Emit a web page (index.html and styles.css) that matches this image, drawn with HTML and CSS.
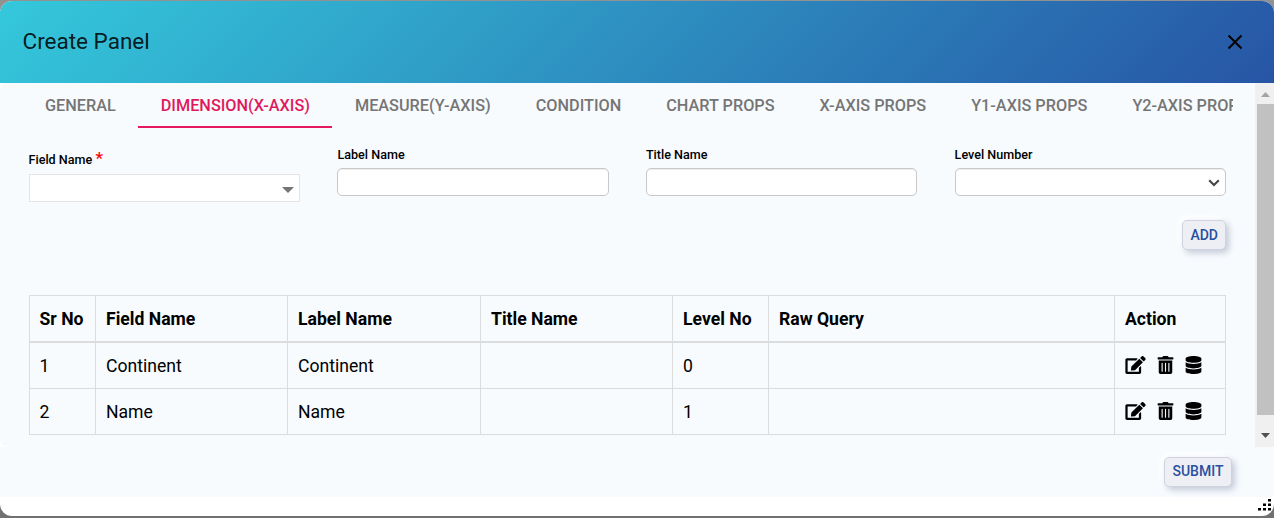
FILE: index.html
```html
<!DOCTYPE html>
<html lang="en">
<head>
<meta charset="utf-8">
<title>Create Panel</title>
<link rel="stylesheet" href="styles.css">
</head>
<body>
<svg class="defs" width="0" height="0">
  <symbol id="edit" viewBox="0 0 576 512"><path d="M402.6 83.200l90.200 90.200c3.800 3.800 3.800 10 0 13.800L274.400 405.600l-92.800 10.300c-12.400 1.400-22.900-9.100-21.500-21.500l10.300-92.800L388.800 83.200c3.800-3.800 10-3.800 13.800 0zm162-22.900l-48.800-48.800c-15.200-15.200-39.900-15.200-55.200 0l-35.400 35.400c-3.800 3.800-3.800 10 0 13.800l90.200 90.200c3.800 3.800 10 3.800 13.800 0l35.400-35.400c15.200-15.300 15.200-40 0-55.200zM384 346.200V448H64V128h229.800c3.200 0 6.200-1.300 8.500-3.500l40-40c7.600-7.600 2.200-20.500-8.500-20.500H48C21.500 64 0 85.500 0 112v352c0 26.500 21.500 48 48 48h352c26.500 0 48-21.500 48-48V306.200c0-10.700-12.900-16-20.500-8.500l-40 40c-2.200 2.300-3.500 5.300-3.500 8.500z"/></symbol>
  <symbol id="trash" viewBox="0 0 448 512"><path d="M32 464a48 48 0 0 0 48 48h288a48 48 0 0 0 48-48V128H32zm272-256a16 16 0 0 1 32 0v224a16 16 0 0 1-32 0zm-96 0a16 16 0 0 1 32 0v224a16 16 0 0 1-32 0zm-96 0a16 16 0 0 1 32 0v224a16 16 0 0 1-32 0zM432 32H312l-9.400-18.700A24 24 0 0 0 281.100 0H166.800a23.700 23.700 0 0 0-21.400 13.300L136 32H16A16 16 0 0 0 0 48v32a16 16 0 0 0 16 16h416a16 16 0 0 0 16-16V48a16 16 0 0 0-16-16z"/></symbol>
  <symbol id="database" viewBox="0 0 448 512"><path d="M448 73.100v45.700C448 159.100 347.700 192 224 192S0 159.100 0 118.900V73.100C0 32.900 100.300 0 224 0s224 32.900 224 73.100zM448 176v102.900C448 319.100 347.700 352 224 352S0 319.100 0 278.900V176c48.100 33.100 136.200 48.600 224 48.600S399.900 209.100 448 176zm0 160v102.900C448 479.100 347.700 512 224 512S0 479.100 0 438.900V336c48.100 33.100 136.200 48.600 224 48.600S399.900 369.100 448 336z"/></symbol>
</svg>
<div class="dialog">
  <header class="header">
    <h1 class="title">Create Panel</h1>
    <svg class="close" viewBox="0 0 16 16"><path d="M1.500 1.500l13 13M14.500 1.500l-13 13"/></svg>
  </header>
  <div class="body">
    <main class="content">
      <nav class="tabs">
        <span class="tab">GENERAL</span>
        <span class="tab active">DIMENSION(X-AXIS)</span>
        <span class="tab">MEASURE(Y-AXIS)</span>
        <span class="tab">CONDITION</span>
        <span class="tab">CHART PROPS</span>
        <span class="tab">X-AXIS PROPS</span>
        <span class="tab">Y1-AXIS PROPS</span>
        <span class="tab">Y2-AXIS PROPS</span>
      </nav>
      <div class="fields">
        <div class="field">
          <div class="label required">Field Name <span class="star">*</span></div>
          <div class="box combo"><svg class="caret" viewBox="0 0 12 6"><path d="M0 0h12L6 6z"/></svg></div>
        </div>
        <div class="field"><div class="label">Label Name</div><div class="box"></div></div>
        <div class="field"><div class="label">Title Name</div><div class="box"></div></div>
        <div class="field"><div class="label">Level Number</div><div class="box select"><svg class="chevron" viewBox="0 0 12 8"><path d="M1.200 1.200L6 6l4.800-4.800"/></svg></div></div>
      </div>
      <div class="actions"><button class="btn">ADD</button></div>
      <table class="grid">
        <colgroup><col class="c-sr"><col class="c-field"><col class="c-label"><col class="c-title"><col class="c-level"><col class="c-query"><col class="c-action"></colgroup>
        <thead><tr><th>Sr No</th><th>Field Name</th><th>Label Name</th><th>Title Name</th><th>Level No</th><th>Raw Query</th><th>Action</th></tr></thead>
        <tbody>
          <tr><td>1</td><td>Continent</td><td>Continent</td><td></td><td>0</td><td></td><td><div class="icons"><svg class="i-edit"><use href="#edit"/></svg><svg class="i-trash"><use href="#trash"/></svg><svg class="i-db"><use href="#database"/></svg></div></td></tr>
          <tr><td>2</td><td>Name</td><td>Name</td><td></td><td>1</td><td></td><td><div class="icons"><svg class="i-edit"><use href="#edit"/></svg><svg class="i-trash"><use href="#trash"/></svg><svg class="i-db"><use href="#database"/></svg></div></td></tr>
        </tbody>
      </table>
    </main>
    <div class="scrollbar">
      <svg class="arrow up" viewBox="0 0 9 5"><path d="M0 5h9L4.500 0z"/></svg>
      <div class="thumb"></div>
      <svg class="arrow down" viewBox="0 0 9 5"><path d="M0 0h9L4.500 5z"/></svg>
    </div>
  </div>
  <footer class="footer"><button class="btn submit">SUBMIT</button></footer>
  <div class="resize"><svg class="grip" viewBox="0 0 13 12"><path d="M10 0h3v2.500h-3zM5 4.500h3V7H5zM10 4.500h3V7h-3zM0 9h3v2.500H0zM5 9h3v2.500H5zM10 9h3v2.500h-3z"/></svg></div>
</div>
</body>
</html>
```
FILE: styles.css
```css
* { box-sizing: border-box; }
body {
  margin: 0;
  height: 518px;
  padding-top: 1px;
  overflow: hidden;
  background: linear-gradient(#929292, #707070);
  font-family: Roboto, sans-serif;
  color: #000;
}
.defs { position: absolute; }
.dialog {
  height: 515px;
  border-radius: 12px;
  overflow: hidden;
  background: #fff;
}
.header {
  height: 82px;
  padding: 0 31px 0 22.500px;
  display: flex;
  align-items: center;
  justify-content: space-between;
  background: linear-gradient(135deg, #34c8db 0%, #2755a5 100%);
}
.title { margin: 0 0 2px; font-size: 22.500px; font-weight: 400; line-height: 26px; color: rgba(0, 0, 0, .87); }
.close { width: 16px; height: 16px; fill: none; stroke: #000; stroke-width: 2; }
.body { height: 364px; display: flex; }
.content {
  width: 1255px;
  padding: 0 29px 0 29px;
  background: #f7fbfe;
  border-radius: 8px 0 0 8px;
}
.tabs {
  height: 45px;
  margin: 0 -7px 0 -6.500px;
  width: 1210.500px;
  display: flex;
  overflow: hidden;
}
.tab {
  flex: none;
  height: 45px;
  padding: 0 22.500px;
  font-size: 16.250px;
  font-weight: 500;
  line-height: 45px;
  color: #757575;
}
.tab.active { color: #e0195c; border-bottom: 2px solid #e6175c; }
.fields {
  height: 92px;
  padding-top: 18px;
  display: grid;
  grid-template-columns: repeat(4, 271.250px);
  column-gap: 37.200px;
}
.label { height: 22px; padding-top: 1px; font-size: 12.600px; font-weight: 500; line-height: 16px; }
.field:last-child { margin: 0 -.3px 0 .3px; }
.label.required { height: 28px; padding-top: 6px; margin-left: -.5px; }
.star { color: #f00; font-size: 17px; line-height: 10px; }
.box {
  height: 28px;
  display: flex;
  align-items: center;
  justify-content: flex-end;
  border: 1px solid #c8c8c8;
  border-radius: 5px;
  background: #fff;
  box-shadow: inset 0 1px 1px rgba(0, 0, 0, .075);
}
.combo { border-color: #e4e4e4; border-radius: 0; box-shadow: none; padding: 4px 5px 0 0; }
.select { padding: 2px 5px 0 0; }
.caret { width: 12px; height: 6px; fill: #757575; }
.chevron { width: 12px; height: 8px; fill: none; stroke: #444; stroke-width: 2; }
.actions { height: 75px; display: flex; justify-content: flex-end; align-items: flex-start; }
.btn {
  height: 30px;
  padding: 0 7px;
  border: 1px solid #d0d3df;
  border-radius: 5px;
  background: #eeeff5;
  color: #2a4fa0;
  font: 500 14px/28px Roboto, sans-serif;
  box-shadow: 3px 3px 6px #c5cad8, -3px -3px 7px #fff;
}
.submit { padding: 0 7.500px 2px; line-height: 26px; }
.grid {
  width: 1197px;
  table-layout: fixed;
  border-collapse: collapse;
  font-size: 17.600px;
  line-height: 26px;
}
.c-sr { width: 66px; }
.c-field { width: 192px; }
.c-label { width: 193px; }
.c-title { width: 192px; }
.c-level { width: 96px; }
.c-query { width: 346px; }
.c-action { width: 111px; }
.grid th, .grid td { height: 46px; padding: 2px 10px 0; border: 1px solid #dcdcdc; text-align: left; }
.grid th { font-weight: 700; border-bottom-width: 2px; }
.grid tbody tr:first-child td { height: 47px; }
.grid tbody tr:last-child td { padding-top: 0; }
.grid td:first-child, .grid th:first-child { padding-left: 9.500px; }
.icons { display: flex; align-items: center; height: 26px; padding-bottom: 2px; fill: #000; }
.i-edit { width: 21px; height: 18px; }
.i-trash { width: 17px; height: 18px; margin-left: 11px; }
.i-db { width: 17px; height: 18px; margin-left: 11px; }
.scrollbar {
  width: 19px;
  display: flex;
  flex-direction: column;
  align-items: flex-end;
  background: #f0f0f0;
}
.thumb { width: 17px; height: 311px; background: #c1c1c1; }
.arrow { width: 9px; height: 5px; }
.up { margin: 9px 4px 7px 0; fill: #a3a3a3; }
.down { margin: 18px 4px 0 0; fill: #505050; }
.footer { height: 50px; padding: 10px 42px 0 0; display: flex; justify-content: flex-end; align-items: flex-start; background: #f7fbfe; }
.resize { height: 19px; padding: 2px 3px 0 0; display: flex; justify-content: flex-end; }
.grip { width: 13px; height: 12px; fill: #000; }
```
